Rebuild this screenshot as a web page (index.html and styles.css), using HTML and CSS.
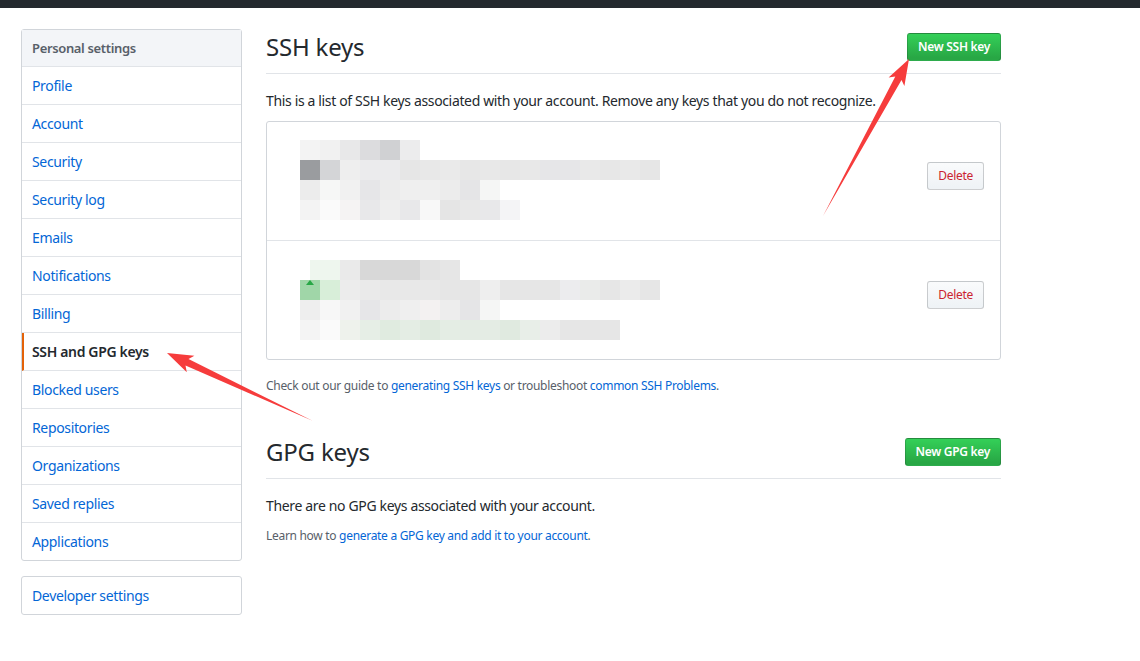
FILE: index.html
```html
<!DOCTYPE html>
<html lang="en">
<head>
  <meta charset="UTF-8" />
  <title>SSH and GPG keys</title>
  <link rel="stylesheet" href="styles.css">
</head>
<body>
  <div class="topbar"></div>

  <div class="page">
    <nav class="sidebar">
      <div class="menu">
        <h3 class="menu-heading">Personal settings</h3>
        <a class="menu-item" href="#">Profile</a>
        <a class="menu-item" href="#">Account</a>
        <a class="menu-item" href="#">Security</a>
        <a class="menu-item" href="#">Security log</a>
        <a class="menu-item" href="#">Emails</a>
        <a class="menu-item" href="#">Notifications</a>
        <a class="menu-item" href="#">Billing</a>
        <a class="menu-item selected" href="#">SSH and GPG keys</a>
        <a class="menu-item" href="#">Blocked users</a>
        <a class="menu-item" href="#">Repositories</a>
        <a class="menu-item" href="#">Organizations</a>
        <a class="menu-item" href="#">Saved replies</a>
        <a class="menu-item" href="#">Applications</a>
      </div>
      <div class="menu">
        <a class="menu-item" href="#">Developer settings</a>
      </div>
    </nav>

    <main class="content">
      <div class="subhead">
        <h2 class="subhead-heading">SSH keys</h2>
        <a class="btn btn-primary" href="#">New SSH key</a>
      </div>
      <p class="lead">This is a list of SSH keys associated with your account. Remove any keys that you do not recognize.</p>

      <div class="key-list">
        <div class="key-row">
          <!-- key fingerprint, pixelated -->
          <svg class="key-info" width="360" height="80" viewBox="0 0 360 80">
            <g>
              <rect x="0" y="0" width="20" height="20" fill="#f3f3f3"/><rect x="20" y="0" width="20" height="20" fill="#f1f1f1"/><rect x="40" y="0" width="20" height="20" fill="#e8e8e9"/><rect x="60" y="0" width="20" height="20" fill="#dcdcde"/><rect x="80" y="0" width="20" height="20" fill="#d0d1d3"/><rect x="100" y="0" width="20" height="20" fill="#ececed"/>
            </g>
            <g>
              <rect x="0" y="20" width="20" height="20" fill="#9a9c9f"/><rect x="20" y="20" width="20" height="20" fill="#d4d5d7"/><rect x="40" y="20" width="20" height="20" fill="#eeeeee"/><rect x="60" y="20" width="20" height="20" fill="#ebebed"/><rect x="80" y="20" width="20" height="20" fill="#ebebed"/><rect x="100" y="20" width="20" height="20" fill="#e6e6e6"/><rect x="120" y="20" width="20" height="20" fill="#e8e8e8"/><rect x="140" y="20" width="20" height="20" fill="#eaeaea"/><rect x="160" y="20" width="20" height="20" fill="#e7e7e7"/><rect x="180" y="20" width="20" height="20" fill="#e8e8e8"/><rect x="200" y="20" width="20" height="20" fill="#e7e7e7"/><rect x="220" y="20" width="20" height="20" fill="#e8e8e8"/><rect x="240" y="20" width="20" height="20" fill="#e6e6e8"/><rect x="260" y="20" width="20" height="20" fill="#e6e6e8"/><rect x="280" y="20" width="20" height="20" fill="#e9e9e9"/><rect x="300" y="20" width="20" height="20" fill="#e7e7e7"/><rect x="320" y="20" width="20" height="20" fill="#e9e9e9"/><rect x="340" y="20" width="20" height="20" fill="#e6e6e6"/>
            </g>
            <g>
              <rect x="0" y="40" width="20" height="20" fill="#ececec"/><rect x="20" y="40" width="20" height="20" fill="#f6f7f6"/><rect x="40" y="40" width="20" height="20" fill="#f1f1f1"/><rect x="60" y="40" width="20" height="20" fill="#e6e6e8"/><rect x="80" y="40" width="20" height="20" fill="#ececec"/><rect x="100" y="40" width="20" height="20" fill="#efefef"/><rect x="120" y="40" width="20" height="20" fill="#efefef"/><rect x="140" y="40" width="20" height="20" fill="#ececec"/><rect x="160" y="40" width="20" height="20" fill="#e5e5e7"/><rect x="180" y="40" width="20" height="20" fill="#f5f6f5"/>
            </g>
            <g>
              <rect x="0" y="60" width="20" height="20" fill="#f3f3f3"/><rect x="20" y="60" width="20" height="20" fill="#fafafa"/><rect x="40" y="60" width="20" height="20" fill="#f5f3f3"/><rect x="60" y="60" width="20" height="20" fill="#e8e8ea"/><rect x="80" y="60" width="20" height="20" fill="#eeeeee"/><rect x="100" y="60" width="20" height="20" fill="#e8e8ea"/><rect x="120" y="60" width="20" height="20" fill="#f8f8f8"/><rect x="140" y="60" width="20" height="20" fill="#e5e5e5"/><rect x="160" y="60" width="20" height="20" fill="#e8e8e8"/><rect x="180" y="60" width="20" height="20" fill="#e8e8ea"/><rect x="200" y="60" width="20" height="20" fill="#f4f4f6"/>
            </g>
          </svg>
          <button class="btn btn-danger">Delete</button>
        </div>

        <div class="key-row">
          <svg class="key-info" width="360" height="80" viewBox="0 0 360 80">
            <g>
              <rect x="10" y="0" width="30" height="20" fill="#eef6ee"/><rect x="40" y="0" width="20" height="20" fill="#eaeaea"/><rect x="60" y="0" width="20" height="20" fill="#d8d8d8"/><rect x="80" y="0" width="20" height="20" fill="#d8d8d8"/><rect x="100" y="0" width="20" height="20" fill="#d8d8d8"/><rect x="120" y="0" width="20" height="20" fill="#e3e3e3"/><rect x="140" y="0" width="20" height="20" fill="#e6e6e6"/>
            </g>
            <g>
              <rect x="0" y="20" width="20" height="20" fill="#a0d6a8"/><rect x="20" y="20" width="20" height="20" fill="#d8eed9"/><rect x="40" y="20" width="20" height="20" fill="#ececec"/><rect x="60" y="20" width="20" height="20" fill="#eaeaea"/><rect x="80" y="20" width="20" height="20" fill="#e8e8e8"/><rect x="100" y="20" width="20" height="20" fill="#e8e8e8"/><rect x="120" y="20" width="20" height="20" fill="#e8e8e8"/><rect x="140" y="20" width="20" height="20" fill="#e6e6e6"/><rect x="160" y="20" width="20" height="20" fill="#e6e6e6"/><rect x="180" y="20" width="20" height="20" fill="#eeeeee"/><rect x="200" y="20" width="20" height="20" fill="#e6e6e6"/><rect x="220" y="20" width="20" height="20" fill="#e6e6e6"/><rect x="240" y="20" width="20" height="20" fill="#e6e6e6"/><rect x="260" y="20" width="20" height="20" fill="#ececee"/><rect x="280" y="20" width="20" height="20" fill="#eaebea"/><rect x="300" y="20" width="20" height="20" fill="#e6e6e6"/><rect x="320" y="20" width="20" height="20" fill="#ebebeb"/><rect x="340" y="20" width="20" height="20" fill="#e6e6e6"/>
              <path d="M10 20 L14 25 L6 25 Z" fill="#28a745"/>
            </g>
            <g>
              <rect x="0" y="40" width="20" height="20" fill="#eeeeee"/><rect x="20" y="40" width="20" height="20" fill="#f7f7f7"/><rect x="40" y="40" width="20" height="20" fill="#f1f1f1"/><rect x="60" y="40" width="20" height="20" fill="#e6e6e8"/><rect x="80" y="40" width="20" height="20" fill="#ececec"/><rect x="100" y="40" width="20" height="20" fill="#efefef"/><rect x="120" y="40" width="20" height="20" fill="#f3f1f1"/><rect x="140" y="40" width="20" height="20" fill="#ededed"/><rect x="160" y="40" width="20" height="20" fill="#e5e5e7"/><rect x="180" y="40" width="20" height="20" fill="#f5f6f5"/>
            </g>
            <g>
              <rect x="0" y="60" width="20" height="20" fill="#f4f4f4"/><rect x="20" y="60" width="20" height="20" fill="#fafafa"/><rect x="40" y="60" width="20" height="20" fill="#eef2ec"/><rect x="60" y="60" width="20" height="20" fill="#e6eee6"/><rect x="80" y="60" width="20" height="20" fill="#e0ebe0"/><rect x="100" y="60" width="20" height="20" fill="#e4ede4"/><rect x="120" y="60" width="20" height="20" fill="#dfeadf"/><rect x="140" y="60" width="20" height="20" fill="#e4ede4"/><rect x="160" y="60" width="20" height="20" fill="#e4ece4"/><rect x="180" y="60" width="20" height="20" fill="#e4ece4"/><rect x="200" y="60" width="20" height="20" fill="#e0eae0"/><rect x="220" y="60" width="20" height="20" fill="#e8eee8"/><rect x="240" y="60" width="20" height="20" fill="#ececec"/><rect x="260" y="60" width="20" height="20" fill="#e6e6e6"/><rect x="280" y="60" width="20" height="20" fill="#e6e6e6"/><rect x="300" y="60" width="20" height="20" fill="#e6e6e6"/>
            </g>
          </svg>
          <button class="btn btn-danger">Delete</button>
        </div>
      </div>

      <p class="note">Check out our guide to <a href="#">generating SSH keys</a> or troubleshoot <a href="#">common SSH Problems</a>.</p>

      <div class="subhead spacious">
        <h2 class="subhead-heading">GPG keys</h2>
        <a class="btn btn-primary" href="#">New GPG key</a>
      </div>
      <p class="lead">There are no GPG keys associated with your account.</p>
      <p class="note">Learn how to <a href="#">generate a GPG key and add it to your account</a>.</p>
    </main>
  </div>

  <!-- red callout arrows drawn over the page -->
  <svg class="callouts" width="1140" height="661" viewBox="0 0 1140 661">
    <polygon points="167,353 194.4,355.8 188.5,359.1 313,421 185.5,365.5 186.8,372.2" fill="#f63c3c"/>
    <polygon points="909,59 888.6,77.5 895.3,76.6 823,216 901.5,80 904.4,86.1" fill="#f63c3c"/>
  </svg>
</body>
</html>
```

FILE: styles.css
```css
body {
  margin: 0;
  font-family: "Noto Sans", "Open Sans", Arial, sans-serif;
  font-size: 14px;
  line-height: 1.5;
  letter-spacing: -0.35px;
  color: #24292e;
  background: #fff;
  position: relative;
}
a {
  color: #0366d6;
  text-decoration: none;
}
.topbar {
  height: 8px;
  background: #24292e;
}
.page {
  display: flex;
  gap: 24px;
  padding: 21px 0 0 21px;
}

/* sidebar */
.sidebar {
  width: 221px;
  display: flex;
  flex-direction: column;
  gap: 15px;
}
.menu {
  border: 1px solid #d1d5da;
  border-radius: 3px;
  display: flex;
  flex-direction: column;
}
.menu-heading {
  margin: 0;
  padding: 8px 10px 7px;
  line-height: 21px;
  font-size: 13px;
  font-weight: 600;
  color: #586069;
  background: #f3f5f8;
  border-bottom: 1px solid #e1e4e8;
}
.menu-item {
  display: block;
  padding: 8px 10px;
  line-height: 21px;
  border-bottom: 1px solid #e1e4e8;
}
.menu-item:last-child {
  border-bottom: none;
}
.menu-item.selected {
  color: #24292e;
  font-weight: 600;
  border-left: 2px solid #e36209;
  padding-left: 8px;
}

/* main column */
.content {
  width: 735px;
}
.subhead {
  display: flex;
  justify-content: space-between;
  align-items: center;
  padding-bottom: 8px;
  border-bottom: 1px solid #e1e4e8;
  margin-bottom: 16px;
}
.subhead.spacious {
  margin-top: 39px;
}
.subhead-heading {
  margin: 0;
  font-size: 24px;
  font-weight: 400;
  line-height: 36px;
  letter-spacing: -0.2px;
}
.lead {
  margin: 0 0 10px;
  line-height: 21px;
}
.note {
  margin: 17px 0 0;
  font-size: 12px;
  line-height: 18px;
  letter-spacing: -0.3px;
  color: #586069;
}
.lead + .note {
  margin-top: 11px;
}

.btn {
  display: inline-block;
  font-family: inherit;
  font-size: 12px;
  font-weight: 600;
  line-height: 20px;
  letter-spacing: -0.3px;
  padding: 3px 10px;
  border: 1px solid rgba(27, 31, 35, 0.2);
  border-radius: 3px;
  cursor: pointer;
}
.btn-primary {
  color: #fff;
  background: linear-gradient(-180deg, #34d058 0%, #28a745 90%);
}
.btn-danger {
  color: #cb2431;
  font-weight: 400;
  background: linear-gradient(-180deg, #fafbfc 0%, #eff3f6 90%);
}

.key-list {
  border: 1px solid #d1d5da;
  border-radius: 3px;
}
.key-row {
  height: 119px;
  box-sizing: border-box;
  display: flex;
  justify-content: space-between;
  align-items: flex-start;
  padding: 18px 16px 0 33px;
  border-bottom: 1px solid #e1e4e8;
}
.key-row + .key-row {
  height: 118px;
  padding-top: 19px;
}
.key-row:last-child {
  border-bottom: none;
}
.key-info {
  display: block;
}
.key-row .btn-danger {
  margin-top: 22px;
}
.key-row + .key-row .btn-danger {
  margin-top: 21px;
}

.callouts {
  position: absolute;
  left: 0;
  top: 0;
  pointer-events: none;
}
```
